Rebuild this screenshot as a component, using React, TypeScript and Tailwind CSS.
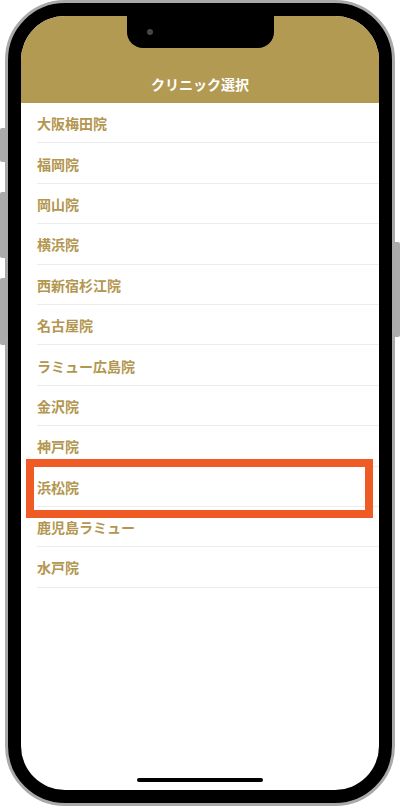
const clinics = [
  "大阪梅田院",
  "福岡院",
  "岡山院",
  "横浜院",
  "西新宿杉江院",
  "名古屋院",
  "ラミュー広島院",
  "金沢院",
  "神戸院",
  "浜松院",
  "鹿児島ラミュー",
  "水戸院",
];

export default function App() {
  return (
    <div
      className="w-[400px] h-[808px] bg-white flex"
      style={{ fontFamily: '"Noto Sans CJK JP", "Noto Sans", sans-serif' }}
    >
      {/* left side buttons */}
      <div className="w-[5px] shrink-0 flex flex-col pt-[128px]">
        <div className="h-[34px] bg-[#ababab] rounded-l-[2px]" />
        <div className="mt-[30px] h-[66px] bg-[#ababab] rounded-l-[2px]" />
        <div className="mt-[20px] h-[67px] bg-[#ababab] rounded-l-[2px]" />
      </div>

      <div className="w-[390px] h-[806px] shrink-0 rounded-[60px] border-[3px] border-[#a9a9a9] bg-black p-[13px]">
        <div className="relative h-full rounded-[44px] bg-white overflow-hidden flex flex-col">
          <header className="h-[87px] shrink-0 bg-[#b39a52] flex flex-col items-center pb-[9px]">
            <div className="w-[147px] h-[32px] bg-black rounded-b-[16px] pl-[20px] pt-[13px]">
              <div className="w-[6px] h-[6px] rounded-full bg-[#4a4545]" />
            </div>
            <h1 className="mt-auto text-[14px] leading-[20px] font-bold text-white">クリニック選択</h1>
          </header>

          <ul className="flex-1">
            {clinics.map((name) => (
              <li
                key={name}
                className="ml-4 h-[40.4px] flex items-center pt-[2px] border-b border-[#ececec] text-[14px] font-bold text-[#b3964f]"
              >
                {name}
              </li>
            ))}
          </ul>

          {/* highlight frame over 浜松院 */}
          <div className="absolute left-[5px] top-[443px] w-[347px] h-[59px] border-[8px] border-[#f05a24]" />

          <div className="pb-[8px] flex justify-center">
            <div className="w-[126px] h-[4px] rounded-full bg-black" />
          </div>
        </div>
      </div>

      {/* right side button */}
      <div className="w-[5px] shrink-0 pt-[242px]">
        <div className="h-[95px] bg-[#ababab] rounded-r-[2px]" />
      </div>
    </div>
  );
}
